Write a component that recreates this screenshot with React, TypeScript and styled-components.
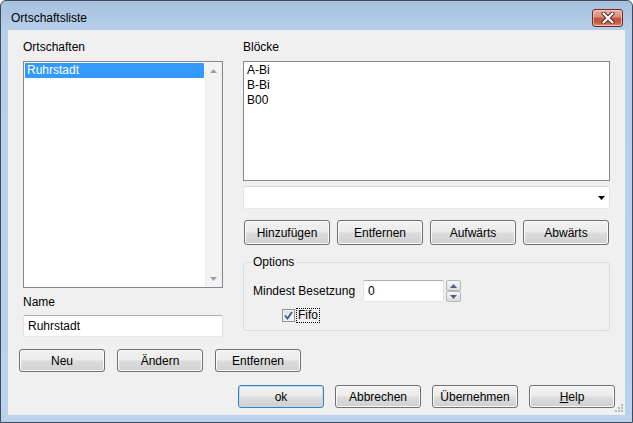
import React from "react";
import styled, { createGlobalStyle } from "styled-components";

const GlobalStyle = createGlobalStyle`
  html, body {
    margin: 0;
    padding: 0;
    background: #ffffff;
  }
  body {
    font-family: "Liberation Sans", Arial, sans-serif;
    font-size: 12px;
    color: #000000;
  }
`;

const Window = styled.div`
  width: 633px;
  height: 423px;
  box-sizing: border-box;
  border: 1px solid #3f4b58;
  border-radius: 6px 6px 0 0;
  background: linear-gradient(180deg, #a6c1df 0px, #b7cfe9 30px, #bad2ec 100%);
  padding: 0 7px 7px;
  display: flex;
  flex-direction: column;
`;

const TitleBar = styled.div`
  height: 29px;
  box-sizing: border-box;
  padding: 8px 2px 0 3px;
  display: flex;
  align-items: flex-start;
  justify-content: space-between;
`;

const Title = styled.span`
  line-height: 18px;
  color: #000000;
`;

const CloseButton = styled.div`
  width: 31px;
  height: 18px;
  box-sizing: border-box;
  border: 1px solid #6e2a22;
  border-radius: 3px;
  background: linear-gradient(180deg, #eab0a3 0%, #d98a7b 45%, #c4503f 50%, #c75a46 80%, #e09a80 100%);
  box-shadow: inset 0 0 0 1px rgba(255, 220, 210, 0.6);
  display: flex;
  align-items: center;
  justify-content: center;
`;

const Client = styled.div`
  flex: 1;
  position: relative;
  background: #f0f0f0;
  display: flex;
  flex-direction: column;
  padding: 10px 10px 7px 15px;
`;

const Columns = styled.div`
  display: grid;
  grid-template-columns: 200px 367px;
  column-gap: 20px;
`;

const Column = styled.div`
  display: flex;
  flex-direction: column;
`;

const Label = styled.div<{ $mt?: number }>`
  line-height: 15px;
  height: 15px;
  margin-top: ${(p) => p.$mt ?? 0}px;
`;

const ListBox = styled.div<{ $h: number; $mt: number }>`
  height: ${(p) => p.$h}px;
  margin-top: ${(p) => p.$mt}px;
  box-sizing: border-box;
  border: 1px solid #828790;
  background: #ffffff;
  display: flex;
`;

const Items = styled.div`
  flex: 1;
  padding: 1px;
`;

const Item = styled.div<{ $selected?: boolean }>`
  height: 15px;
  line-height: 15px;
  padding-left: 2px;
  background: ${(p) => (p.$selected ? "#3399ff" : "transparent")};
  color: ${(p) => (p.$selected ? "#ffffff" : "#000000")};
`;

const ScrollBar = styled.div`
  width: 17px;
  display: flex;
  flex-direction: column;
  background: linear-gradient(90deg, #e3e3e3 0px, #f3f3f3 1px, #f3f3f3 16px, #e8e8e8 17px);
`;

const ScrollArrow = styled.div`
  height: 17px;
  display: flex;
  align-items: center;
  justify-content: center;
`;

const ScrollTrack = styled.div`
  flex: 1;
`;

const TextBox = styled.input<{ $w?: number; $mt?: number }>`
  width: ${(p) => (p.$w ? `${p.$w}px` : "100%")};
  height: 22px;
  margin: ${(p) => p.$mt ?? 0}px 0 0 0;
  box-sizing: border-box;
  border: 1px solid;
  border-color: #abadb3 #dbdfe6 #e3e9ef #e2e3ea;
  border-radius: 2px;
  background: #ffffff;
  padding: 0 4px;
  font: inherit;
  color: #000000;
  outline: none;
`;

const Combo = styled.div`
  height: 23px;
  margin-top: 5px;
  box-sizing: border-box;
  border: 1px solid;
  border-color: #d9d9d9 #e2e2e2 #e8e8e8 #e2e2e2;
  border-radius: 2px;
  background: #ffffff;
  display: flex;
  justify-content: flex-end;
  align-items: center;
  padding-right: 4px;
`;

const Button = styled.button<{ $w?: number; $h?: number; $default?: boolean }>`
  flex-shrink: 0;
  width: ${(p) => p.$w ?? 86}px;
  height: ${(p) => p.$h ?? 23}px;
  box-sizing: border-box;
  margin: 0;
  padding: 0;
  border: 1px solid ${(p) => (p.$default ? "#3c7fb1" : "#707070")};
  border-radius: 3px;
  background: linear-gradient(180deg, #f2f2f2 0%, #ebebeb 48%, #dddddd 52%, #cfcfcf 100%);
  box-shadow: inset 0 0 0 1px ${(p) => (p.$default ? "#b5e0f6" : "#fbfbfb")};
  font: inherit;
  color: #000000;
  text-align: center;
`;

const ButtonRow = styled.div<{ $mt: number; $ml?: number; $gap: number }>`
  display: flex;
  gap: ${(p) => p.$gap}px;
  margin-top: ${(p) => p.$mt}px;
  margin-left: ${(p) => p.$ml ?? 0}px;
`;

const ButtonGrid = styled.div`
  display: grid;
  grid-template-columns: repeat(4, 86px);
  column-gap: 7px;
  padding-left: 1px;
  margin-top: 11px;
`;

const Group = styled.fieldset`
  margin: 10px 0 0 0;
  padding: 0 9px 8px 9px;
  border: 1px solid #d5dfe5;
  border-radius: 3px;
  min-width: 0;
`;

const Legend = styled.legend`
  padding: 0 2px;
  margin-left: -2px;
  line-height: 15px;
`;

const FieldRow = styled.div`
  display: flex;
  align-items: center;
  margin-top: 10px;
  height: 22px;
`;

const FieldLabel = styled.span`
  width: 110px;
`;

const Spin = styled.div`
  display: flex;
  flex-direction: column;
  margin-left: 2px;
`;

const SpinButton = styled.div`
  width: 15px;
  height: 11px;
  box-sizing: border-box;
  border: 1px solid #b5b7ba;
  border-radius: 2px;
  background: linear-gradient(180deg, #f7f7f7 0%, #e9e9e9 50%, #dcdcdc 100%);
  display: flex;
  align-items: center;
  justify-content: center;
`;

const CheckRow = styled.div`
  display: flex;
  align-items: center;
  margin-top: 6px;
  padding-left: 29px;
  gap: 2px;
  height: 14px;
`;

const CheckBox = styled.div`
  width: 13px;
  height: 13px;
  box-sizing: border-box;
  border: 1px solid #8e8f8f;
  background: linear-gradient(135deg, #dcdcdc 0%, #f4f4f4 100%);
  box-shadow: inset 0 0 0 1px #f4f4f4;
  display: flex;
  align-items: center;
  justify-content: center;
`;

const FocusLabel = styled.span`
  outline: 1px dotted #000000;
  padding: 0 1px;
  line-height: 13px;
`;

const Footer = styled.div`
  display: flex;
  justify-content: flex-end;
  gap: 11px;
  margin-top: 13px;
`;

const Grip = styled.svg`
  position: absolute;
  right: 2px;
  bottom: 2px;
`;

const Tri = ({ up, color = "#a0a0a0" }: { up?: boolean; color?: string }) => (
  <svg width="7" height="4" viewBox="0 0 7 4">
    <path d={up ? "M0 4 L3.5 0 L7 4 Z" : "M0 0 L7 0 L3.5 4 Z"} fill={color} />
  </svg>
);

export default function App() {
  return (
    <>
      <GlobalStyle />
      <Window>
        <TitleBar>
          <Title>Ortschaftsliste</Title>
          <CloseButton>
            <svg width="14" height="12" viewBox="0 0 14 12">
              <path d="M2.5 1.5 L11.5 10.5 M11.5 1.5 L2.5 10.5" stroke="#5a2a25" strokeWidth="4" strokeLinecap="round" />
              <path d="M2.5 1.5 L11.5 10.5 M11.5 1.5 L2.5 10.5" stroke="#ffffff" strokeWidth="2.2" strokeLinecap="round" />
            </svg>
          </CloseButton>
        </TitleBar>
        <Client>
          <Columns>
            <Column>
              <Label>Ortschaften</Label>
              <ListBox $h={227} $mt={6}>
                <Items>
                  <Item $selected>Ruhrstadt</Item>
                </Items>
                <ScrollBar>
                  <ScrollArrow>
                    <Tri up />
                  </ScrollArrow>
                  <ScrollTrack />
                  <ScrollArrow>
                    <Tri />
                  </ScrollArrow>
                </ScrollBar>
              </ListBox>
              <Label $mt={7}>Name</Label>
              <TextBox $mt={5} readOnly value="Ruhrstadt" />
              <ButtonRow $mt={12} $ml={-4} $gap={12}>
                <Button>Neu</Button>
                <Button>Ändern</Button>
                <Button>Entfernen</Button>
              </ButtonRow>
            </Column>
            <Column>
              <Label>Blöcke</Label>
              <ListBox $h={120} $mt={6}>
                <Items>
                  <Item>A-Bi</Item>
                  <Item>B-Bi</Item>
                  <Item>B00</Item>
                </Items>
              </ListBox>
              <Combo>
                <Tri color="#000000" />
              </Combo>
              <ButtonGrid>
                <Button $h={25}>Hinzufügen</Button>
                <Button $h={25}>Entfernen</Button>
                <Button $h={25}>Aufwärts</Button>
                <Button $h={25}>Abwärts</Button>
              </ButtonGrid>
              <Group>
                <Legend>Options</Legend>
                <FieldRow>
                  <FieldLabel>Mindest Besetzung</FieldLabel>
                  <TextBox $w={81} readOnly value="0" />
                  <Spin>
                    <SpinButton>
                      <Tri up color="#4d6185" />
                    </SpinButton>
                    <SpinButton>
                      <Tri color="#4d6185" />
                    </SpinButton>
                  </Spin>
                </FieldRow>
                <CheckRow>
                  <CheckBox>
                    <svg width="9" height="9" viewBox="0 0 9 9">
                      <path d="M1 4.5 L3.5 7.5 L8 1" fill="none" stroke="#3d5a98" strokeWidth="1.8" />
                    </svg>
                  </CheckBox>
                  <FocusLabel>Fifo</FocusLabel>
                </CheckRow>
              </Group>
            </Column>
          </Columns>
          <Footer>
            <Button $default>ok</Button>
            <Button>Abbrechen</Button>
            <Button>Übernehmen</Button>
            <Button>
              <u>H</u>elp
            </Button>
          </Footer>
          <Grip width="10" height="10" viewBox="0 0 10 10">
            {[
              [8, 0],
              [8, 3],
              [5, 3],
              [8, 6],
              [5, 6],
              [2, 6],
            ].map(([x, y]) => (
              <rect key={`${x}-${y}`} x={x} y={y + 1} width="2" height="2" fill="#b8b8b8" />
            ))}
          </Grip>
        </Client>
      </Window>
    </>
  );
}
